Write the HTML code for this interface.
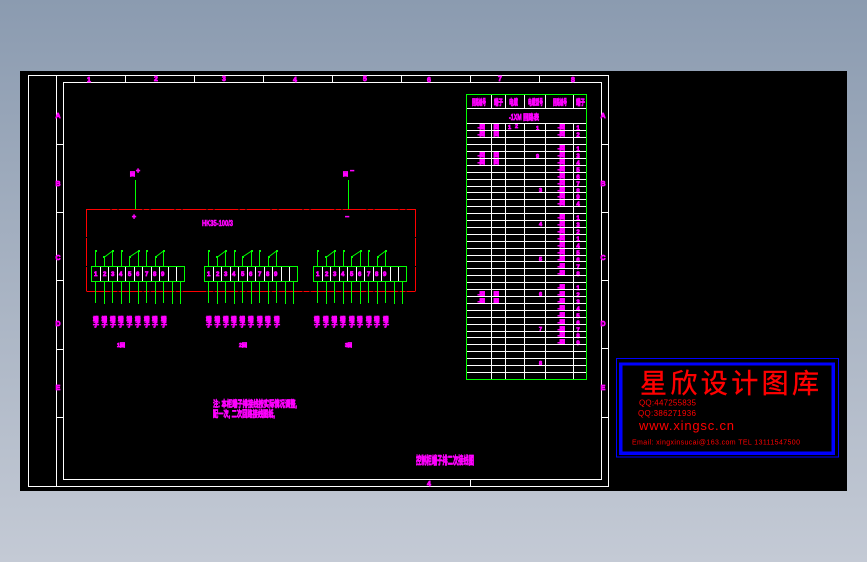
<!DOCTYPE html>
<html>
<head>
<meta charset="utf-8">
<style>
html,body{margin:0;padding:0;width:867px;height:562px;overflow:hidden;background:linear-gradient(180deg,#8b9bb0 0%,#c4cad5 100%)}
svg{position:absolute;left:0;top:0;display:block}
text{font-family:"Liberation Sans","Noto Sans CJK SC",sans-serif}
.m{fill:#f0f;stroke:#f0f;stroke-width:.75;font-weight:bold}
.r{fill:#f00}
.l{stroke:#fff;stroke-width:1;fill:none;shape-rendering:crispEdges}
.g{stroke:#0f0;stroke-width:1;fill:none;shape-rendering:crispEdges}
</style>
</head>
<body>
<svg width="867" height="562" viewBox="0 0 867 562" xmlns="http://www.w3.org/2000/svg">
<defs>
<g id="blk">
<path class="l" d="M100.5 267V281M108.5 267V281M117.5 267V281M125.5 267V281M134.5 267V281M142.5 267V281M151.5 267V281M159.5 267V281M168.5 267V281M176.5 267V281"/>
<path class="g" d="M91.5 266.5H184.5V281.5H91.5ZM95.5 282V303M104.5 282V304M112.5 282V303M121.5 282V304M129.5 282V303M138.5 282V304M146.5 282V303M155.5 282V304M163.5 282V303M172.5 282V304M180.5 282V304M95.5 251V266M112.5 251V266M121.5 251V266M138.5 251V266M146.5 251V266M163.5 251V266M104.5 257V266M129.5 257V266M155.5 257V266"/>
<path d="M104.5 257L112.5 251M129.5 257L138.5 251M155.5 257L163.5 251" stroke="#0f0" fill="none"/>
<path d="M95 250h2v2h-2zM112 250h2v2h-2zM121 250h2v2h-2zM138 250h2v2h-2zM146 250h2v2h-2zM163 250h2v2h-2zM103 256h2v2h-2zM129 256h2v2h-2zM155 256h2v2h-2z" fill="#0f0"/>
</g>
</defs>

<rect x="20" y="71" width="827" height="420" fill="#000"/>

<!-- drawing frame -->
<path class="l" d="M28.5 75.5H608.5V486.5H28.5ZM56.5 75.5V486.5M63.5 82.5H601.5V479.5H63.5ZM125.5 76V82M194.5 76V82M263.5 76V82M332.5 76V82M401.5 76V82M470.5 76V82M539.5 76V82M57 144.5H63M57 212.5H63M57 280.5H63M57 349.5H63M57 417.5H63M602 144.5H608M602 212.5H608M602 280.5H608M602 348.5H608M602 417.5H608M470.5 480V486"/>
<g class="m" font-size="7" text-anchor="middle" stroke-width=".4">
<text x="89" y="82">1</text><text x="156" y="81">2</text><text x="224" y="81">3</text><text x="295" y="82">4</text><text x="365" y="81">5</text><text x="429" y="82">6</text><text x="500" y="81">7</text><text x="573" y="82">8</text>
<text x="58" y="118">A</text><text x="58" y="186">B</text><text x="58" y="260">C</text><text x="58" y="326">D</text><text x="58" y="390">E</text>
<text x="603" y="118">A</text><text x="603" y="186">B</text><text x="603" y="260">C</text><text x="603" y="326">D</text><text x="603" y="390">E</text>
<text x="429" y="486">4</text>
</g>

<!-- table -->
<g class="m" font-size="8">
<text x="472" y="105" textLength="14" lengthAdjust="spacingAndGlyphs">回路编号</text>
<text x="494" y="105" textLength="9" lengthAdjust="spacingAndGlyphs">端子</text>
<text x="509" y="105" textLength="9" lengthAdjust="spacingAndGlyphs">电缆</text>
<text x="528" y="105" textLength="15" lengthAdjust="spacingAndGlyphs">电缆型号</text>
<text x="553" y="105" textLength="14" lengthAdjust="spacingAndGlyphs">回路编号</text>
<text x="576" y="105" textLength="9" lengthAdjust="spacingAndGlyphs">端子</text>
<text x="509" y="120" textLength="30" lengthAdjust="spacingAndGlyphs">-1XM 回路表</text>
</g>
<g class="m" font-size="5.5" text-anchor="end" stroke-width=".8">
<text x="565" y="129">-回</text><text x="565" y="136">-回</text><text x="565" y="150">-回</text><text x="565" y="157">-回</text><text x="565" y="164">-回</text><text x="565" y="171">-回</text><text x="565" y="178">-回</text><text x="565" y="185">-回</text><text x="565" y="192">-回</text><text x="565" y="198">-回</text><text x="565" y="205">-回</text><text x="565" y="219">-回</text><text x="565" y="226">-回</text><text x="565" y="233">-回</text><text x="565" y="240">-回</text><text x="565" y="247">-回</text><text x="565" y="254">-回</text><text x="565" y="261">-回</text><text x="565" y="268">-回</text><text x="565" y="275">-回</text><text x="565" y="289">-回</text><text x="565" y="296">-回</text><text x="565" y="303">-回</text><text x="565" y="310">-回</text><text x="565" y="317">-回</text><text x="565" y="324">-回</text><text x="565" y="331">-回</text><text x="565" y="337">-回</text><text x="565" y="344">-回</text>
<text x="485" y="129">-回</text><text x="485" y="136">-回</text><text x="485" y="157">-回</text><text x="485" y="164">-回</text><text x="485" y="296">-回</text><text x="485" y="303">-回</text>
<text x="499" y="129">回</text><text x="499" y="136">回</text><text x="499" y="157">回</text><text x="499" y="164">回</text><text x="499" y="296">回</text><text x="499" y="303">回</text>
<text x="511" y="129">1</text><text x="518" y="128">2</text>
<text x="542" y="192">3</text><text x="542" y="226">4</text><text x="542" y="261">5</text><text x="542" y="296">6</text><text x="542" y="331">7</text><text x="542" y="365">8</text>
<text x="539" y="158">9</text><text x="539" y="130">1</text>
</g>
<g class="m" font-size="6" text-anchor="middle" stroke-width=".3">
<text x="578" y="130">1</text><text x="578" y="137">2</text><text x="578" y="151">1</text><text x="578" y="158">3</text><text x="578" y="165">4</text><text x="578" y="172">5</text><text x="578" y="179">6</text><text x="578" y="186">7</text><text x="578" y="193">8</text><text x="578" y="199">9</text><text x="578" y="206">4</text><text x="578" y="220">1</text><text x="578" y="227">3</text><text x="578" y="234">2</text><text x="578" y="241">1</text><text x="578" y="248">4</text><text x="578" y="255">5</text><text x="578" y="262">6</text><text x="578" y="269">7</text><text x="578" y="276">8</text><text x="578" y="290">1</text><text x="578" y="297">2</text><text x="578" y="304">3</text><text x="578" y="311">4</text><text x="578" y="318">5</text><text x="578" y="325">6</text><text x="578" y="332">7</text><text x="578" y="338">8</text><text x="578" y="345">9</text>
</g>
<path class="l" d="M467 108.5H586M467 123.5H586M467 130.5H586M467 137.5H586M467 144.5H586M467 151.5H586M467 158.5H586M467 165.5H586M467 172.5H586M467 179.5H586M467 186.5H586M467 192.5H586M467 199.5H586M467 206.5H586M467 213.5H586M467 220.5H586M467 227.5H586M467 234.5H586M467 241.5H586M467 248.5H586M467 255.5H586M467 261.5H586M467 268.5H586M467 275.5H586M467 282.5H586M467 289.5H586M467 296.5H586M467 303.5H586M467 310.5H586M467 317.5H586M467 324.5H586M467 331.5H586M467 337.5H586M467 344.5H586M467 351.5H586M467 358.5H586M467 365.5H586M467 372.5H586"/>
<path class="l" d="M491.5 95V108M505.5 95V108M524.5 95V108M545.5 95V108M573.5 95V108M491.5 123V379M505.5 123V379M524.5 123V379M545.5 123V379M573.5 123V379"/>
<rect class="g" x="466.5" y="94.5" width="120" height="285"/>

<!-- schematic -->
<path d="M86.5 209.5H415.5M86.5 291.5H415.5" stroke="#f00" stroke-width="1" stroke-dasharray="24 1 6 1" fill="none" shape-rendering="crispEdges"/>
<path d="M86.5 209V291M415.5 209V291" stroke="#f00" stroke-width="1" stroke-dasharray="28 1" fill="none" shape-rendering="crispEdges"/>
<path class="g" d="M135.5 180V209M348.5 180V209"/>
<use href="#blk"/>
<use href="#blk" x="113"/>
<use href="#blk" x="222"/>

<g class="m" font-size="7" stroke-width=".3">
<text x="130" y="176" font-size="5" stroke-width=".75">回</text><text x="136" y="173">+</text>
<text x="132" y="219">+</text>
<text x="343" y="176" font-size="5" stroke-width=".75">回</text><text x="350" y="173">−</text>
<text x="345" y="219">−</text>
<text x="202" y="226" font-size="8" stroke-width=".6" textLength="31" lengthAdjust="spacingAndGlyphs">HK35-100/3</text>
</g>

<g class="m" font-size="6" stroke-width=".1" font-weight="normal">
<text y="276" x="94 103 111 119 128 136 145 153 161">123456789</text>
<text y="276" x="207 216 224 232 241 249 258 266 274">123456789</text>
<text y="276" x="316 325 333 341 350 358 367 375 383">123456789</text>
</g>
<g class="m" font-size="5.5" stroke-width=".4">
<text y="321" x="93 101.5 110 118 126.5 135 144 152 161">端端端端端端端端端</text>
<text y="327" x="93 101.5 110 118 126.5 135 144 152 161" font-size="6" stroke-width=".7">子子子子子子子子子</text>
<text y="321" x="206 214.5 223 231 239.5 248 257 265 274">端端端端端端端端端</text>
<text y="327" x="206 214.5 223 231 239.5 248 257 265 274" font-size="6" stroke-width=".7">子子子子子子子子子</text>
<text y="321" x="314 323 331.5 340 349 357 366 374 383">端端端端端端端端端</text>
<text y="327" x="314 323 331.5 340 349 357 366 374 383" font-size="6" stroke-width=".7">子子子子子子子子子</text>
</g>
<g class="m" font-size="5" stroke-width="1">
<text x="117" y="347" textLength="8" lengthAdjust="spacingAndGlyphs">1回</text>
<text x="239" y="347" textLength="8" lengthAdjust="spacingAndGlyphs">2回</text>
<text x="345" y="347" textLength="7" lengthAdjust="spacingAndGlyphs">3回</text>
</g>

<g class="m" font-size="9" stroke-width=".6">
<text x="213" y="407" textLength="84" lengthAdjust="spacingAndGlyphs">注: 本柜端子排接线按实际情况调整,</text>
<text x="213" y="417" textLength="62" lengthAdjust="spacingAndGlyphs">配一次, 二次回路接线图纸,</text>
<text x="416" y="464" font-size="11" stroke-width=".8" textLength="58" lengthAdjust="spacingAndGlyphs">控制柜端子排二次接线图</text>
</g>

<!-- logo -->
<rect x="616.5" y="358.5" width="222" height="98.5" fill="none" stroke="#00f" stroke-width="1" shape-rendering="crispEdges"/>
<rect x="620.7" y="364" width="212.6" height="89.3" fill="none" stroke="#00f" stroke-width="3.4" shape-rendering="crispEdges"/>
<text class="r" x="640" y="393" font-size="27" textLength="179" stroke="#f00" stroke-width=".4" style="font-family:'WenQuanYi Zen Hei','Noto Sans CJK SC',sans-serif">星欣设计图库</text>
<g class="r">
<text x="639" y="405.5" font-size="8" textLength="57">QQ:447255835</text>
<text x="638" y="416" font-size="8" textLength="58">QQ:386271936</text>
<text x="639" y="430" font-size="13" textLength="95">www.xingsc.cn</text>
<text x="632" y="444.5" font-size="7" textLength="168">Email: xingxinsucai@163.com  TEL 13111547500</text>
</g>
</svg>
</body>
</html>
